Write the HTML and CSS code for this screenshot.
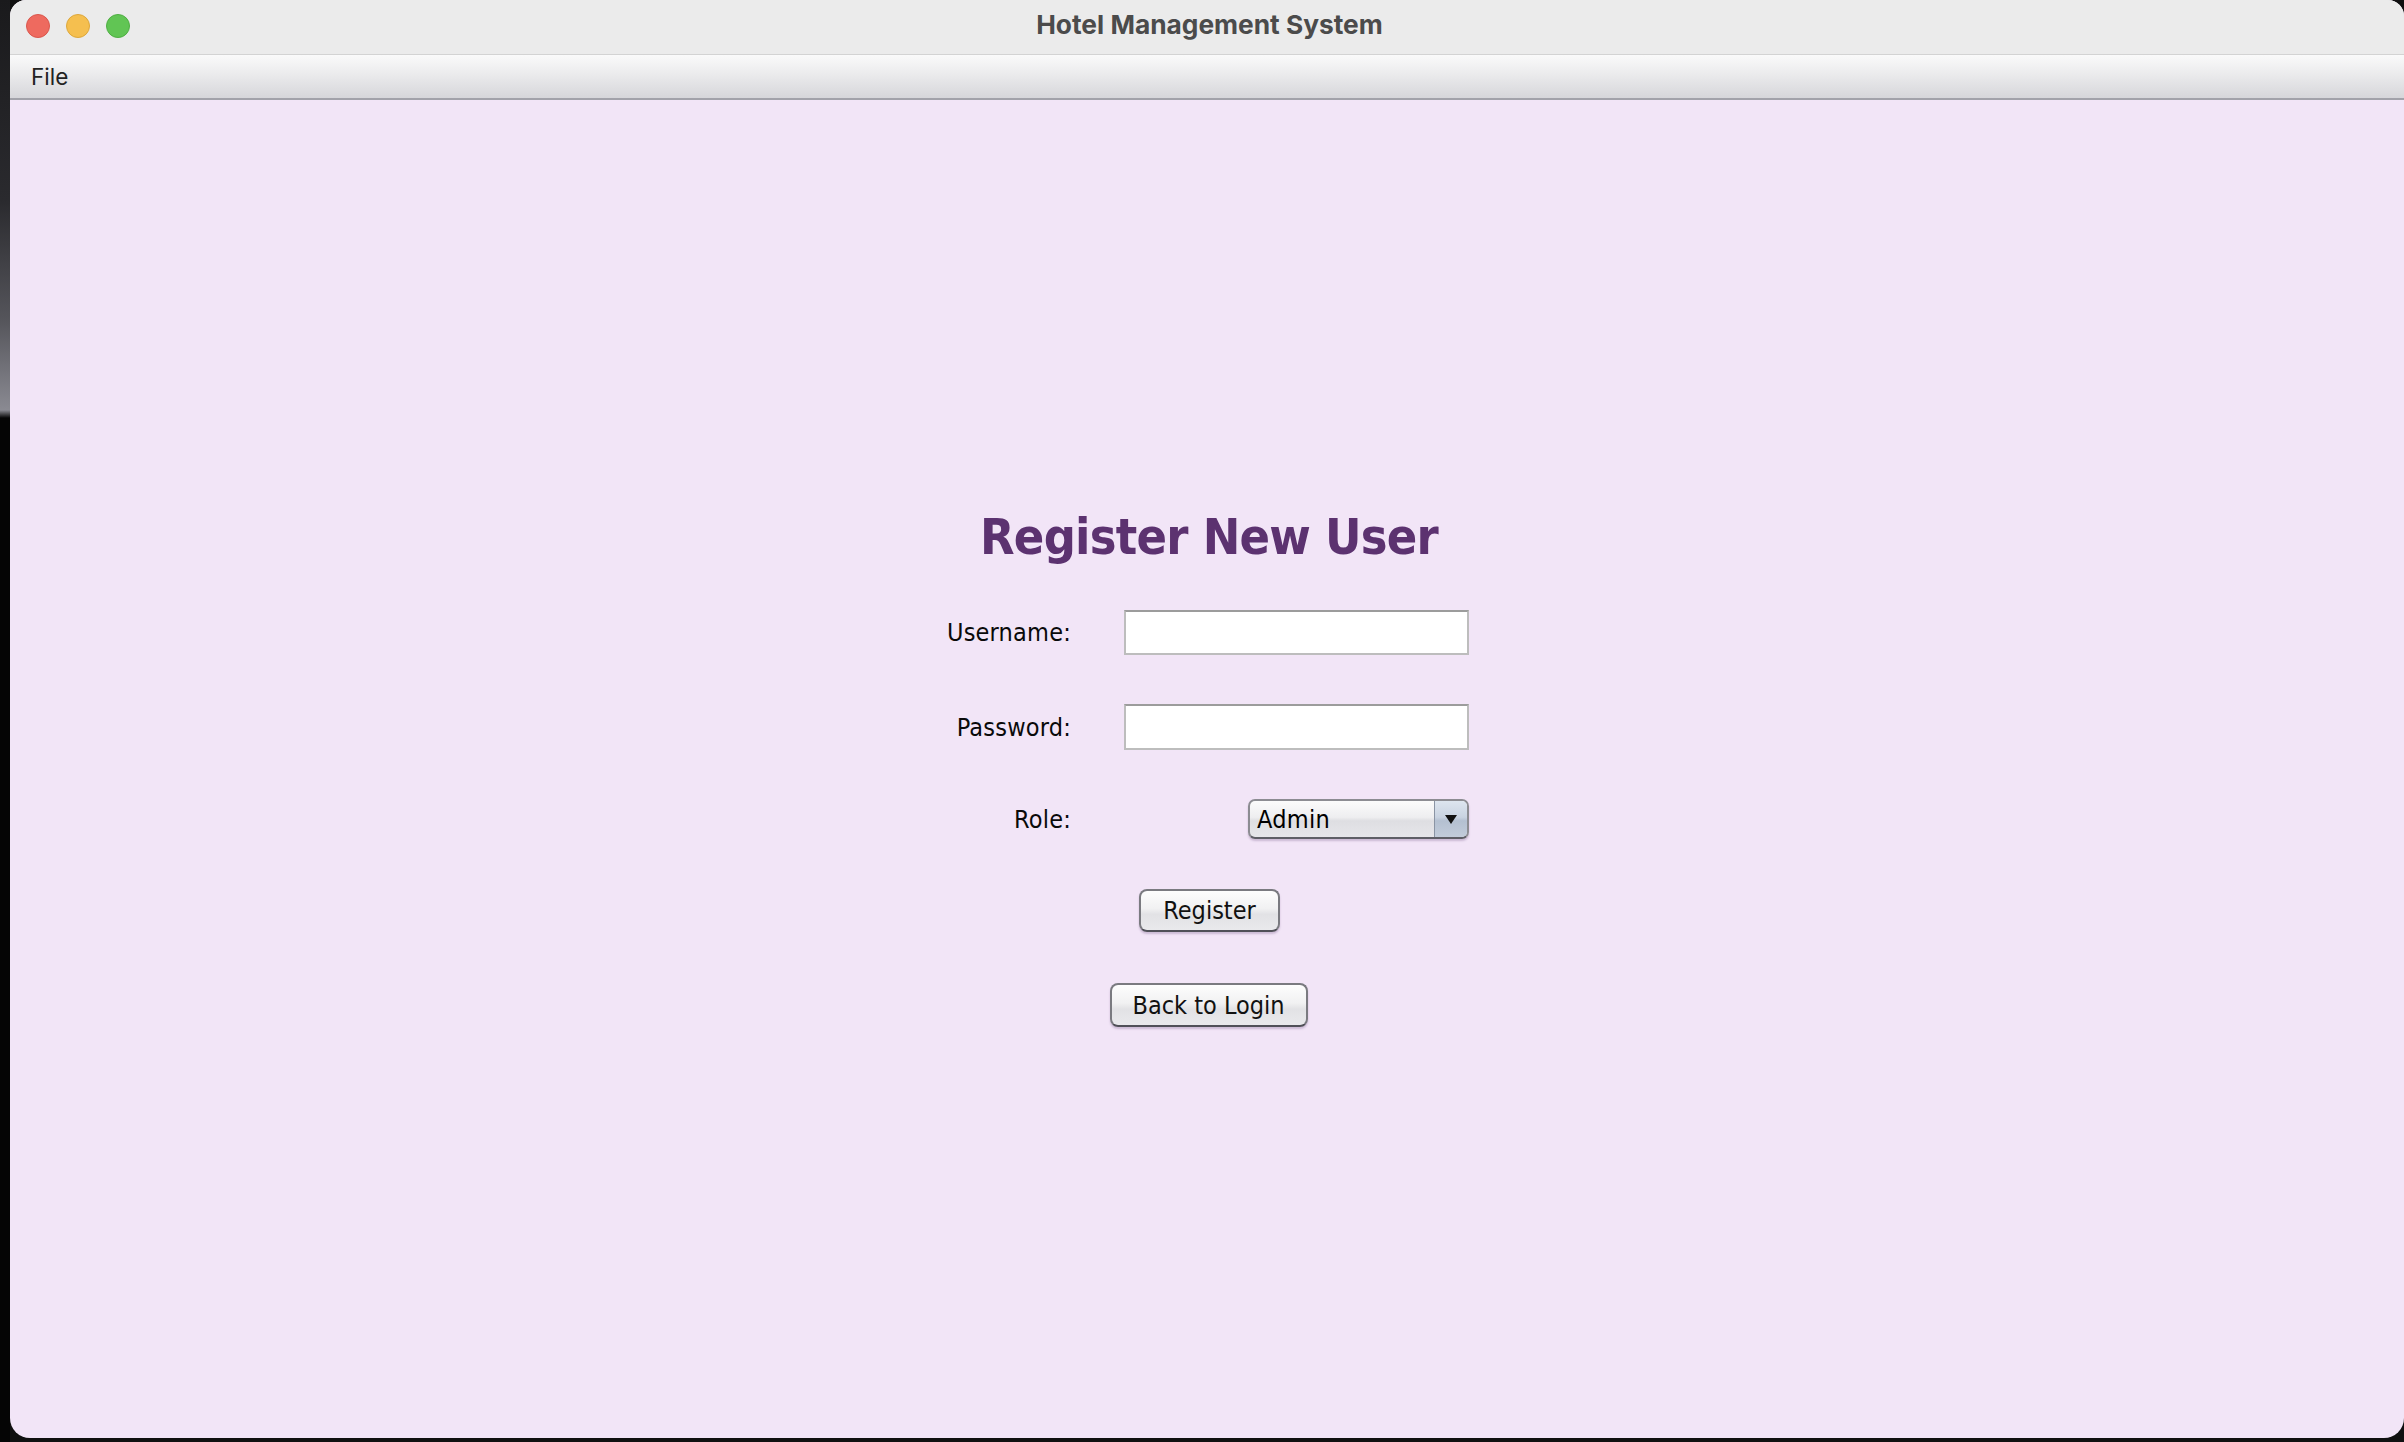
FILE: index.html
```html
<!DOCTYPE html>
<html>
<head>
<meta charset="utf-8">
<title>Hotel Management System</title>
<link rel="stylesheet" href="styles.css">
</head>
<body>
<div class="desktop">
  <div class="wallpaper"></div>
  <div class="window">
    <div class="titlebar">
      <div class="lights">
        <span class="light red"></span>
        <span class="light yellow"></span>
        <span class="light green"></span>
      </div>
      <div class="title">Hotel Management System</div>
      <div></div>
    </div>
    <div class="menubar"><span class="menu">File</span></div>
    <div class="content">
      <div class="form">
        <h1 class="heading">Register New User</h1>
        <div class="row row-user">
          <label class="label">Username:</label>
          <input class="field" type="text">
        </div>
        <div class="row row-pass">
          <label class="label">Password:</label>
          <input class="field" type="password">
        </div>
        <div class="row row-role">
          <label class="label">Role:</label>
          <div class="combo">
            <span class="combo-text">Admin</span>
            <span class="combo-arrow"><svg width="12" height="9" viewBox="0 0 12 9"><path d="M0 0H12L6 9Z" fill="#111"/></svg></span>
          </div>
        </div>
        <button class="btn btn-register">Register</button>
        <button class="btn btn-back">Back to Login</button>
      </div>
    </div>
  </div>
</div>
</body>
</html>
```

FILE: styles.css
```css
html, body {
  margin: 0;
  padding: 0;
  background: #0d0d0d;
  overflow: hidden;
}

.desktop {
  position: relative;
  width: 2404px;
  height: 1442px;
  display: flex;
  background: #101010;
}

.wallpaper {
  width: 10px;
  height: 1442px;
  background: linear-gradient(to bottom, #1a1a1c 0px, #2a2a2e 200px, #55555b 320px, #8a8a92 410px, #050505 418px, #050505 1442px);
}

.window {
  width: 2394px;
  height: 1438px;
  border-radius: 16px 16px 20px 20px;
  overflow: hidden;
  display: flex;
  flex-direction: column;
  background: #f2e5f7;
}

.titlebar {
  height: 54px;
  flex: none;
  background: #ebebeb;
  border-bottom: 1px solid #d3d3d3;
  display: grid;
  grid-template-columns: 1fr auto 1fr;
  align-items: center;
}

.lights {
  display: flex;
  gap: 16px;
  padding-left: 16px;
  padding-bottom: 2px;
}

.light {
  width: 24px;
  height: 24px;
  border-radius: 50%;
  box-sizing: border-box;
}

.red { background: #ee6a5f; border: 1px solid #d9574d; }
.yellow { background: #f5bf4f; border: 1px solid #dca73c; }
.green { background: #61c554; border: 1px solid #4fae43; }

.title {
  font-family: "Inter", "Liberation Sans", sans-serif;
  font-weight: 700;
  font-size: 26.3px;
  color: #4b4b4b;
  padding-bottom: 5px;
  padding-left: 5px;
}

.menubar {
  height: 43px;
  flex: none;
  background: linear-gradient(to bottom, #fafafa 0%, #f0f0f1 30%, #dedee1 80%, #d6d6da 100%);
  border-bottom: 2px solid #a2a2aa;
  display: flex;
  align-items: center;
}

.menu {
  font-family: "Inter", "Liberation Sans", sans-serif;
  font-size: 22.5px;
  color: #222;
  padding-left: 21px;
}

.content {
  flex: 1;
  display: flex;
  justify-content: center;
  padding-top: 412px;
  padding-left: 1px;
}

.form {
  width: 523px;
  display: flex;
  flex-direction: column;
  font-family: "DejaVu Sans Condensed", "DejaVu Sans", sans-serif;
  font-stretch: condensed;
}

.heading {
  margin: 0 0 0 3px;
  font-size: 50px;
  line-height: 50px;
  font-weight: 700;
  letter-spacing: -0.75px;
  color: #5c3270;
  text-align: center;
  white-space: nowrap;
  font-family: "DejaVu Sans Condensed", "DejaVu Sans", sans-serif;
  font-stretch: condensed;
}

.row {
  display: flex;
  align-items: center;
}

.row-user { margin-top: 48px; height: 45px; }
.row-pass { margin-top: 49px; height: 46px; }
.row-role { margin-top: 49px; height: 40px; }

.label {
  width: 125px;
  text-align: right;
  margin-right: 53px;
  font-size: 25px;
  letter-spacing: 0.2px;
  color: #0a0a0a;
  flex: none;
}

.field {
  flex: none;
  box-sizing: border-box;
  width: 345px;
  height: 100%;
  margin: 0;
  padding: 0 6px;
  background: #fff;
  border: 2px solid #bdbdbd;
  border-top-color: #9c9c9c;
  outline: none;
  font-size: 22px;
}

.combo {
  flex: none;
  margin-left: auto;
  width: 221px;
  height: 40px;
  box-sizing: border-box;
  border: 2px solid #8c8c92;
  border-bottom-color: #5e5e66;
  border-radius: 7px;
  background: linear-gradient(to bottom, #fbfbfb 0%, #eeeef0 45%, #dedee2 55%, #e6e6ea 100%);
  display: flex;
  align-items: stretch;
  overflow: hidden;
  box-shadow: 0 2px 2px rgba(90, 60, 110, 0.25);
}

.combo-text {
  flex: 1;
  padding-left: 7px;
  display: flex;
  align-items: center;
  font-size: 25px;
  letter-spacing: 0.3px;
  color: #000;
}

.combo-arrow {
  width: 32px;
  display: flex;
  align-items: center;
  justify-content: center;
  border-left: 1px solid #8a94a4;
  background: linear-gradient(to bottom, #dde5ef 0%, #c9d3e1 45%, #b4c0d1 55%, #c2ccda 100%);
}

.btn {
  align-self: center;
  box-sizing: border-box;
  margin: 0;
  padding: 0;
  font-family: "DejaVu Sans Condensed", "DejaVu Sans", sans-serif;
  font-stretch: condensed;
  font-size: 25px;
  color: #111;
  border: 2px solid #7a7a80;
  border-bottom-color: #505058;
  border-radius: 8px;
  background: linear-gradient(to bottom, #fdfdfd 0%, #f1f1f2 45%, #e2e2e5 60%, #e9e9ec 100%);
  box-shadow: 0 2px 2px rgba(90, 60, 110, 0.25);
}

.btn-register {
  margin-top: 50px;
  width: 141px;
  height: 43px;
  margin-left: 4px;
}

.btn-back {
  margin-top: 51px;
  width: 198px;
  height: 44px;
  margin-left: 2px;
}
```
